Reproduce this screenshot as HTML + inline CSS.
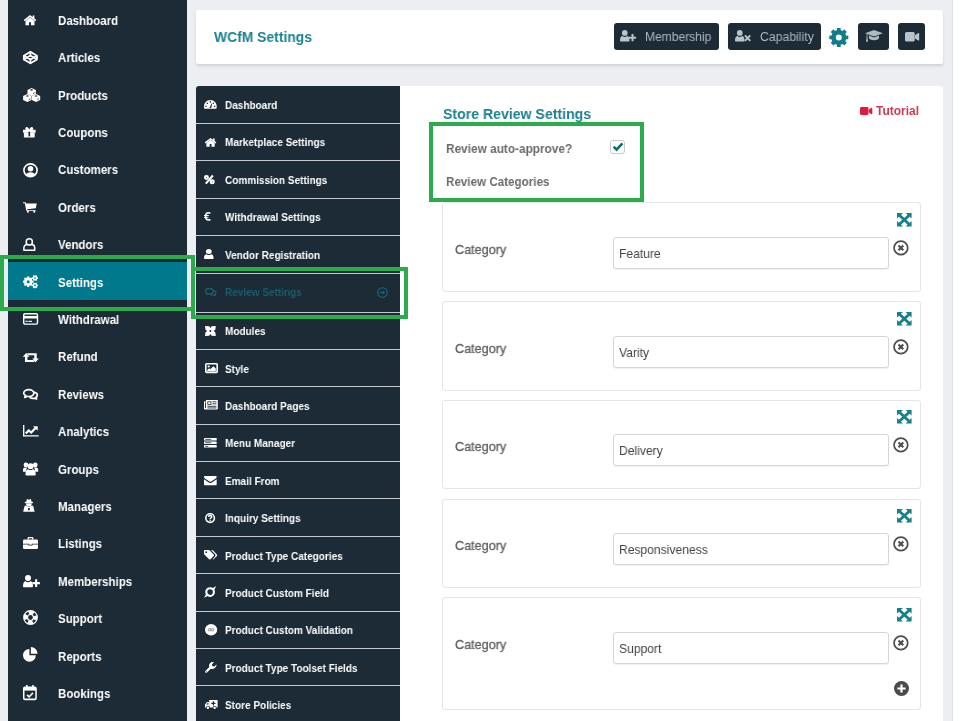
<!DOCTYPE html>
<html><head><meta charset="utf-8"><title>WCfM Settings</title>
<style>
html,body{margin:0;padding:0;}
body{width:960px;height:721px;overflow:hidden;background:#eceef2;font-family:"Liberation Sans",sans-serif;position:relative;}
.t{position:absolute;white-space:nowrap;transform-origin:0 50%;will-change:transform;}
.abs{position:absolute;}
.gbox{position:absolute;border:4.4px solid #2bab4b;box-sizing:border-box;}
.card{position:absolute;left:441.5px;width:479px;background:#fff;border:1px solid #e3e5e8;border-radius:3px;box-sizing:border-box;}
.inp{position:absolute;left:613px;width:275.5px;height:32px;border:1px solid #d6d6d6;border-radius:3px;box-sizing:border-box;background:#fff;box-shadow:0 1px 1px rgba(0,0,0,.06);}
.sep{position:absolute;left:196px;width:204.3px;height:1px;background:#c3c9ce;}
.btn{position:absolute;top:23px;height:26.5px;background:#1c2b36;border-radius:3px;}
</style></head><body>

<div class="abs" style="left:952px;top:0;width:8px;height:721px;background:#fff;border-left:1px solid #dfe2e6;box-sizing:border-box"></div>
<div class="abs" style="left:8px;top:0;width:179px;height:721px;background:#1c2b36"></div>
<div class="abs" style="left:8px;top:262px;width:179px;height:38px;background:#00798c"></div>
<svg style="position:absolute;left:23.75px;top:14.8px;color:#fff;overflow:visible;" width="12" height="10.2" viewBox="0 0 12 10" preserveAspectRatio="none" fill="currentColor"><path d="M6 0 L12.3 5 L11.3 6.2 L6 2 L0.7 6.2 L-0.3 5 Z"/><path d="M6 2.2 L10.5 5.8 V10 H7 V7 H5 V10 H1.5 V5.8 Z"/><rect x="8.6" y="0.5" width="1.8" height="3.2"/></svg>
<div class="t" style="left:58px;top:10.8px;line-height:20px;font-size:13px;font-weight:bold;color:#fff;transform:scaleX(0.885);">Dashboard</div>
<svg style="position:absolute;left:22.9px;top:51px;color:#fff;overflow:visible;" width="14.8" height="13.1" viewBox="0 0 15 14" preserveAspectRatio="none" fill="currentColor"><g fill="none" stroke="currentColor" stroke-width="1.9" stroke-linejoin="round"><path d="M7.5 0.9 L14.1 5 V9 L7.5 13.1 L0.9 9 V5 Z"/><path d="M0.9 5 L7.5 9.2 L14.1 5 M0.9 9 L7.5 4.8 L14.1 9 M7.5 0.9 V4.8 M7.5 9.2 V13.1"/></g></svg>
<div class="t" style="left:58px;top:48.2px;line-height:20px;font-size:13px;font-weight:bold;color:#fff;transform:scaleX(0.885);">Articles</div>
<svg style="position:absolute;left:22.9px;top:88px;color:#fff;overflow:visible;" width="17.3" height="14" viewBox="0 0 17.3 14" preserveAspectRatio="none" fill="currentColor"><path d="M8.65 0.0 L12.850000000000001 1.9 V6.0 L8.65 7.9 L4.45 6.0 V1.9 Z"/><path fill="#1c2b36" d="M8.65 1.1 L10.450000000000001 1.9 L8.65 2.7 L6.8500000000000005 1.9 Z"/><path fill="none" stroke="#1c2b36" stroke-width="0.9" stroke-linecap="round" d="M10.35 5.5 L11.25 4.8"/><path d="M4.3 6.1 L8.5 8 V12.1 L4.3 14 L0.09999999999999964 12.1 V8 Z"/><path fill="#1c2b36" d="M4.3 7.2 L6.1 8 L4.3 8.8 L2.5 8 Z"/><path fill="none" stroke="#1c2b36" stroke-width="0.9" stroke-linecap="round" d="M6.0 11.6 L6.9 10.9"/><path d="M13 6.1 L17.2 8 V12.1 L13 14 L8.8 12.1 V8 Z"/><path fill="#1c2b36" d="M13 7.2 L14.8 8 L13 8.8 L11.2 8 Z"/><path fill="none" stroke="#1c2b36" stroke-width="0.9" stroke-linecap="round" d="M14.7 11.6 L15.6 10.9"/></svg>
<div class="t" style="left:58px;top:85.6px;line-height:20px;font-size:13px;font-weight:bold;color:#fff;transform:scaleX(0.885);">Products</div>
<svg style="position:absolute;left:23px;top:126.8px;color:#fff;overflow:visible;" width="12.6" height="10.4" viewBox="0 0 12.6 10.5" preserveAspectRatio="none" fill="currentColor"><path d="M3.2 0.2 C4.6 -0.2 5.6 1 6.3 2.4 C7 1 8 -0.2 9.4 0.2 C10.8 0.8 10.4 2.4 9.6 3 H3 C2.2 2.4 1.8 0.8 3.2 0.2 Z"/><rect x="0" y="2.8" width="12.6" height="3"/><rect x="0.9" y="5.5" width="10.8" height="5" rx="0.6"/><rect x="5.45" y="4.8" width="1.7" height="4.7" fill="#1c2b36"/></svg>
<div class="t" style="left:58px;top:123.0px;line-height:20px;font-size:13px;font-weight:bold;color:#fff;transform:scaleX(0.885);">Coupons</div>
<svg style="position:absolute;left:23px;top:162.6px;color:#fff;overflow:visible;" width="15" height="14.6" viewBox="0 0 15 15" preserveAspectRatio="none" fill="currentColor"><defs><clipPath id="ucc"><circle cx="7.5" cy="7.5" r="6.4"/></clipPath></defs><circle cx="7.5" cy="7.5" r="6.6" fill="none" stroke="currentColor" stroke-width="1.6"/><circle cx="7.5" cy="6" r="2.8"/><ellipse cx="7.5" cy="13.6" rx="5.2" ry="4" clip-path="url(#ucc)"/></svg>
<div class="t" style="left:58px;top:160.4px;line-height:20px;font-size:13px;font-weight:bold;color:#fff;transform:scaleX(0.885);">Customers</div>
<svg style="position:absolute;left:23px;top:202px;color:#fff;overflow:visible;" width="14" height="10.8" viewBox="0 0 14 11" preserveAspectRatio="none" fill="currentColor"><path d="M0 0.3 H2.6 L3 1.6 H13.8 L12.8 6.4 L4.2 7.3 L4.4 8.1 H12.6 V9 H3.3 L1.8 1.3 H0 Z"/><circle cx="4.9" cy="10" r="1.05"/><circle cx="11.3" cy="10" r="1.05"/></svg>
<div class="t" style="left:58px;top:197.8px;line-height:20px;font-size:13px;font-weight:bold;color:#fff;transform:scaleX(0.885);">Orders</div>
<svg style="position:absolute;left:23px;top:238px;color:#fff;overflow:visible;" width="12.6" height="13" viewBox="0 0 12.6 13" preserveAspectRatio="none" fill="currentColor"><g fill="none" stroke="currentColor" stroke-width="1.5"><path d="M0.9 12.2 V10 C0.9 7.8 2.3 6.6 4.2 6.6 H8.4 C10.3 6.6 11.7 7.8 11.7 10 V12.2 Z" stroke-linejoin="round"/><circle cx="6.3" cy="3.9" r="3.1" fill="#1c2b36"/></g></svg>
<div class="t" style="left:58px;top:235.2px;line-height:20px;font-size:13px;font-weight:bold;color:#fff;transform:scaleX(0.885);">Vendors</div>
<svg style="position:absolute;left:23.1px;top:275px;color:#fff;overflow:visible;" width="15" height="13" viewBox="0 0 15 13" preserveAspectRatio="none" fill="currentColor"><path fill-rule="evenodd" d="M9.28 5.69 L10.39 5.61 L10.39 7.79 L9.28 7.71 L8.80 8.87 L9.64 9.60 L8.10 11.14 L7.37 10.30 L6.21 10.78 L6.29 11.89 L4.11 11.89 L4.19 10.78 L3.03 10.30 L2.30 11.14 L0.76 9.60 L1.60 8.87 L1.12 7.71 L0.01 7.79 L0.01 5.61 L1.12 5.69 L1.60 4.53 L0.76 3.80 L2.30 2.26 L3.03 3.10 L4.19 2.62 L4.11 1.51 L6.29 1.51 L6.21 2.62 L7.37 3.10 L8.10 2.26 L9.64 3.80 L8.80 4.53 Z M3.70 6.70 a1.5 1.5 0 1 0 3.0 0 a1.5 1.5 0 1 0 -3.0 0 Z"/><path fill-rule="evenodd" d="M14.23 2.25 L14.98 2.16 L14.98 3.84 L14.23 3.75 L13.76 4.55 L14.22 5.16 L12.76 6.01 L12.46 5.30 L11.54 5.30 L11.24 6.01 L9.78 5.16 L10.24 4.55 L9.77 3.75 L9.02 3.84 L9.02 2.16 L9.77 2.25 L10.24 1.45 L9.78 0.84 L11.24 -0.01 L11.54 0.70 L12.46 0.70 L12.76 -0.01 L14.22 0.84 L13.76 1.45 Z M11.15 3.00 a0.85 0.85 0 1 0 1.7 0 a0.85 0.85 0 1 0 -1.7 0 Z"/><path fill-rule="evenodd" d="M14.23 9.65 L14.98 9.56 L14.98 11.24 L14.23 11.15 L13.76 11.95 L14.22 12.56 L12.76 13.41 L12.46 12.70 L11.54 12.70 L11.24 13.41 L9.78 12.56 L10.24 11.95 L9.77 11.15 L9.02 11.24 L9.02 9.56 L9.77 9.65 L10.24 8.85 L9.78 8.24 L11.24 7.39 L11.54 8.10 L12.46 8.10 L12.76 7.39 L14.22 8.24 L13.76 8.85 Z M11.15 10.40 a0.85 0.85 0 1 0 1.7 0 a0.85 0.85 0 1 0 -1.7 0 Z"/></svg>
<div class="t" style="left:58px;top:272.6px;line-height:20px;font-size:13px;font-weight:bold;color:#fff;transform:scaleX(0.885);">Settings</div>
<svg style="position:absolute;left:23px;top:313.2px;color:#fff;overflow:visible;" width="15.2" height="11.8" viewBox="0 0 15 12" preserveAspectRatio="none" fill="currentColor"><rect x="0.7" y="0.7" width="13.6" height="10.6" rx="1.3" fill="none" stroke="currentColor" stroke-width="1.4"/><rect x="0.7" y="3" width="13.6" height="2.6"/><rect x="2.4" y="7.9" width="2.2" height="1.2"/><rect x="5.4" y="7.9" width="3.4" height="1.2"/></svg>
<div class="t" style="left:58px;top:310.0px;line-height:20px;font-size:13px;font-weight:bold;color:#fff;transform:scaleX(0.885);">Withdrawal</div>
<svg style="position:absolute;left:23px;top:352.5px;color:#fff;overflow:visible;" width="15.7" height="9.3" viewBox="0 0 16 9.5" preserveAspectRatio="none" fill="currentColor"><path d="M3.2 0 L6.6 3.8 H4.5 V7.1 H10.4 L12.2 9.3 H2 V3.8 H-0.2 Z"/><path d="M12.8 9.5 L9.4 5.7 H11.5 V2.4 H5.6 L3.8 0.2 H14 V5.7 H16.2 Z"/></svg>
<div class="t" style="left:58px;top:347.4px;line-height:20px;font-size:13px;font-weight:bold;color:#fff;transform:scaleX(0.885);">Refund</div>
<svg style="position:absolute;left:23px;top:389.2px;color:#fff;overflow:visible;" width="15" height="10.7" viewBox="0 0 15 11" preserveAspectRatio="none" fill="currentColor"><g fill="none" stroke="currentColor" stroke-width="1.75" stroke-linejoin="round"><path d="M10.2 3.2 C12.6 3.4 14.3 4.8 14.3 6.4 C14.3 7.4 13.7 8.2 12.8 8.8 L13.6 10.3 L11.2 9.5 C9.4 9.8 7.6 9.3 6.6 8.3"/><path fill="#1c2b36" d="M5.8 0.7 C8.6 0.7 10.9 2.2 10.9 4.2 C10.9 6.2 8.6 7.7 5.8 7.7 C5.2 7.7 4.7 7.6 4.2 7.5 L1.8 8.6 L2.5 6.8 C1.4 6.2 0.7 5.3 0.7 4.2 C0.7 2.2 3 0.7 5.8 0.7 Z"/></g></svg>
<div class="t" style="left:58px;top:384.8px;line-height:20px;font-size:13px;font-weight:bold;color:#fff;transform:scaleX(0.885);">Reviews</div>
<svg style="position:absolute;left:23px;top:425.4px;color:#fff;overflow:visible;" width="15.7" height="11.6" viewBox="0 0 16 12" preserveAspectRatio="none" fill="currentColor"><path d="M0 0 H1.4 V10.6 H16 V12 H0 Z"/><path fill="none" stroke="currentColor" stroke-width="2.2" d="M2.8 8.9 L5.9 5.6 L8.4 7.8 L12.8 3.2"/><path d="M10.2 1.2 H15 V6 Z"/></svg>
<div class="t" style="left:58px;top:422.2px;line-height:20px;font-size:13px;font-weight:bold;color:#fff;transform:scaleX(0.885);">Analytics</div>
<svg style="position:absolute;left:23px;top:461.8px;color:#fff;overflow:visible;" width="15.2" height="13.4" viewBox="0 0 15 13.4" preserveAspectRatio="none" fill="currentColor"><circle cx="2.9" cy="2.9" r="2.3"/><circle cx="12.1" cy="2.9" r="2.3"/><path d="M0 9.8 V7.6 C0 6.2 1 5.5 2 5.5 H4.4 C3.4 6.6 3 7.8 3 9.8 Z"/><path d="M15 9.8 V7.6 C15 6.2 14 5.5 13 5.5 H10.6 C11.6 6.6 12 7.8 12 9.8 Z"/><circle cx="7.5" cy="4.2" r="2.9"/><path d="M3.3 13.4 C2.6 13.4 2.3 12.8 2.4 12 C2.6 9 3.6 7.3 5.3 7.2 C6 7.8 6.7 8.1 7.5 8.1 C8.3 8.1 9 7.8 9.7 7.2 C11.4 7.3 12.4 9 12.6 12 C12.7 12.8 12.4 13.4 11.7 13.4 Z"/></svg>
<div class="t" style="left:58px;top:459.59999999999997px;line-height:20px;font-size:13px;font-weight:bold;color:#fff;transform:scaleX(0.885);">Groups</div>
<svg style="position:absolute;left:23.4px;top:499.2px;color:#fff;overflow:visible;" width="11.8" height="12.7" viewBox="0 0 11.8 12.7" preserveAspectRatio="none" fill="currentColor"><path d="M3.2 3 L3.8 0.5 C3.9 0.1 4.3 0 4.6 0.2 L5.9 0.8 L7.2 0.2 C7.5 0 7.9 0.1 8 0.5 L8.6 3 Z"/><ellipse cx="5.9" cy="3.5" rx="4.3" ry="1.1"/><path d="M3 4.4 H8.8 C8.8 6.4 7.6 7.4 5.9 7.4 C4.2 7.4 3 6.4 3 4.4 Z"/><path d="M0.2 12.7 L1.4 7.6 C1.7 6.8 2.4 6.4 3.2 6.4 L5.9 8 L8.6 6.4 C9.4 6.4 10.1 6.8 10.4 7.6 L11.6 12.7 Z"/><path fill="#1c2b36" d="M5.2 9 H6.6 L6.9 11.2 H4.9 Z"/></svg>
<div class="t" style="left:58px;top:497.0px;line-height:20px;font-size:13px;font-weight:bold;color:#fff;transform:scaleX(0.885);">Managers</div>
<svg style="position:absolute;left:23px;top:536.6px;color:#fff;overflow:visible;" width="15" height="12" viewBox="0 0 15 12" preserveAspectRatio="none" fill="currentColor"><path fill="none" stroke="currentColor" stroke-width="1.3" d="M5.2 2.6 V1.2 C5.2 0.9 5.4 0.7 5.7 0.7 H9.3 C9.6 0.7 9.8 0.9 9.8 1.2 V2.6"/><rect x="0" y="2.4" width="15" height="9.6" rx="1.3"/><path fill="#1c2b36" d="M0 6.8 H6.3 V7.7 H8.7 V6.8 H15 V7.4 H9.5 V8.4 H5.5 V7.4 H0 Z"/></svg>
<div class="t" style="left:58px;top:534.4px;line-height:20px;font-size:13px;font-weight:bold;color:#fff;transform:scaleX(0.885);">Listings</div>
<svg style="position:absolute;left:23px;top:574.5px;color:#fff;overflow:visible;" width="16.8" height="12.2" viewBox="0 0 16.8 12" preserveAspectRatio="none" fill="currentColor"><circle cx="5" cy="3" r="3"/><path d="M1 12 C0.3 12 0 11.5 0 10.8 C0.1 8 1 6.3 2.6 6.2 C3.3 6.9 4.1 7.2 5 7.2 C5.9 7.2 6.7 6.9 7.4 6.2 C9 6.3 9.9 8 10 10.8 C10 11.5 9.7 12 9 12 Z"/><path d="M12.1 4.2 H14.2 V6.9 H16.9 V9 H14.2 V11.7 H12.1 V9 H9.4 V6.9 H12.1 Z"/></svg>
<div class="t" style="left:58px;top:571.8px;line-height:20px;font-size:13px;font-weight:bold;color:#fff;transform:scaleX(0.885);">Memberships</div>
<svg style="position:absolute;left:23px;top:610px;color:#fff;overflow:visible;" width="15" height="15" viewBox="0 0 15 15" preserveAspectRatio="none" fill="currentColor"><circle cx="7.5" cy="7.5" r="6.8" fill="none" stroke="currentColor" stroke-width="1.2"/><circle cx="7.5" cy="7.5" r="3" fill="none" stroke="currentColor" stroke-width="1.2"/><circle cx="7.5" cy="7.5" r="4.9" fill="none" stroke="currentColor" stroke-width="3.4" stroke-dasharray="4.9 2.797" stroke-dashoffset="2.45"/></svg>
<div class="t" style="left:58px;top:609.1999999999999px;line-height:20px;font-size:13px;font-weight:bold;color:#fff;transform:scaleX(0.885);">Support</div>
<svg style="position:absolute;left:23px;top:647.4px;color:#fff;overflow:visible;" width="15" height="14.6" viewBox="0 0 15 14.6" preserveAspectRatio="none" fill="currentColor"><path d="M6.4 8.2 V1.9 A6.4 6.4 0 1 0 12.8 8.2 Z"/><path d="M7.9 6.7 V0 A6.7 6.7 0 0 1 14.6 6.7 Z"/></svg>
<div class="t" style="left:58px;top:646.5999999999999px;line-height:20px;font-size:13px;font-weight:bold;color:#fff;transform:scaleX(0.885);">Reports</div>
<svg style="position:absolute;left:23px;top:685px;color:#fff;overflow:visible;" width="13.8" height="15.2" viewBox="0 0 13.8 15" preserveAspectRatio="none" fill="currentColor"><rect x="0.75" y="2.3" width="12.3" height="11.9" rx="1.2" fill="none" stroke="currentColor" stroke-width="1.5"/><rect x="0.75" y="2.3" width="12.3" height="3.2"/><rect x="3" y="0" width="1.7" height="3.6" rx="0.6"/><rect x="9.1" y="0" width="1.7" height="3.6" rx="0.6"/><path fill="none" stroke="currentColor" stroke-width="1.6" d="M4 9.7 L6.1 11.8 L9.9 7.8"/></svg>
<div class="t" style="left:58px;top:683.9999999999999px;line-height:20px;font-size:13px;font-weight:bold;color:#fff;transform:scaleX(0.885);">Bookings</div>
<div class="abs" style="left:195.8px;top:9.6px;width:747.2px;height:54px;background:#fff;border-radius:2.5px;box-shadow:0 2px 3px rgba(0,0,0,.12)"></div>
<div class="t" style="left:213.8px;top:27.0px;line-height:20px;font-size:14.5px;font-weight:bold;color:#1d8291;transform:scaleX(0.958);">WCfM Settings</div>
<div class="btn" style="left:614px;width:105px"></div>
<svg style="position:absolute;left:620px;top:30.2px;color:#b9c4cb;overflow:visible;" width="16" height="11.6" viewBox="0 0 16.8 12" preserveAspectRatio="none" fill="currentColor"><circle cx="5" cy="3" r="3"/><path d="M1 12 C0.3 12 0 11.5 0 10.8 C0.1 8 1 6.3 2.6 6.2 C3.3 6.9 4.1 7.2 5 7.2 C5.9 7.2 6.7 6.9 7.4 6.2 C9 6.3 9.9 8 10 10.8 C10 11.5 9.7 12 9 12 Z"/><path d="M12.1 4.2 H14.2 V6.9 H16.9 V9 H14.2 V11.7 H12.1 V9 H9.4 V6.9 H12.1 Z"/></svg>
<div class="t" style="left:645.4px;top:26.6px;line-height:20px;font-size:12.5px;font-weight:normal;color:#adb8c0;transform:scaleX(0.964);">Membership</div>
<div class="btn" style="left:728px;width:93px"></div>
<svg style="position:absolute;left:735px;top:30.2px;color:#b9c4cb;overflow:visible;" width="16" height="11.6" viewBox="0 0 16.8 12" preserveAspectRatio="none" fill="currentColor"><circle cx="5" cy="3" r="3"/><path d="M1 12 C0.3 12 0 11.5 0 10.8 C0.1 8 1 6.3 2.6 6.2 C3.3 6.9 4.1 7.2 5 7.2 C5.9 7.2 6.7 6.9 7.4 6.2 C9 6.3 9.9 8 10 10.8 C10 11.5 9.7 12 9 12 Z"/><path fill="none" stroke="currentColor" stroke-width="2" d="M10.4 5.6 L16 11.2 M16 5.6 L10.4 11.2"/></svg>
<div class="t" style="left:760px;top:26.6px;line-height:20px;font-size:12.5px;font-weight:normal;color:#adb8c0;transform:scaleX(0.98);">Capability</div>
<svg style="position:absolute;left:829.2px;top:28px;color:#0e7b8e;overflow:visible;" width="19.6" height="18.8" viewBox="0 0 19.6 18.8" preserveAspectRatio="none" fill="currentColor"><path fill-rule="evenodd" d="M17.19 7.63 L19.31 7.47 L19.31 11.33 L17.19 11.17 L16.28 13.37 L17.89 14.76 L15.16 17.49 L13.77 15.88 L11.57 16.79 L11.73 18.91 L7.87 18.91 L8.03 16.79 L5.83 15.88 L4.44 17.49 L1.71 14.76 L3.32 13.37 L2.41 11.17 L0.29 11.33 L0.29 7.47 L2.41 7.63 L3.32 5.43 L1.71 4.04 L4.44 1.31 L5.83 2.92 L8.03 2.01 L7.87 -0.11 L11.73 -0.11 L11.57 2.01 L13.77 2.92 L15.16 1.31 L17.89 4.04 L16.28 5.43 Z M6.80 9.40 a3.0 3.0 0 1 0 6.0 0 a3.0 3.0 0 1 0 -6.0 0 Z"/></svg>
<div class="btn" style="left:857.5px;width:31px"></div>
<svg style="position:absolute;left:864.5px;top:29.9px;color:#aeb9c0;overflow:visible;" width="18" height="12" viewBox="0 0 18 12" preserveAspectRatio="none" fill="currentColor"><path d="M9 0 L18 3.2 L9 6.4 L0 3.2 Z"/><path d="M4 5.6 L9 7.4 L14 5.6 V8 C14 9.3 11.8 10.2 9 10.2 C6.2 10.2 4 9.3 4 8 Z"/><path d="M1.6 4.2 L2.5 4.5 V7.6 L3.1 11.8 H1 L1.6 7.6 Z"/></svg>
<div class="btn" style="left:897.5px;width:27px"></div>
<svg style="position:absolute;left:904.7px;top:31.5px;color:#b9c3ca;overflow:visible;" width="14.2" height="9.6" viewBox="0 0 14 9.6" preserveAspectRatio="none" fill="currentColor"><rect x="0" y="0" width="9.6" height="9.6" rx="1.6"/><path d="M9.9 3.2 L13 1 C13.4 0.7 14 1 14 1.5 V8.1 C14 8.6 13.4 8.9 13 8.6 L9.9 6.4 Z"/></svg>
<div class="abs" style="left:196px;top:86px;width:747px;height:640px;background:#fff;border-radius:3px 3px 0 0"></div>
<div class="abs" style="left:196px;top:86px;width:204.3px;height:640px;background:#1c2b36;border-radius:3px 0 0 0"></div>
<svg style="position:absolute;left:204.4px;top:100.4px;color:#fff;overflow:visible;" width="12.7" height="8.8" viewBox="0 0 12.7 8.8" preserveAspectRatio="none" fill="currentColor"><path d="M0.4 8.8 C0.1 8.2 0 7.3 0 6.4 C0 2.9 2.8 0 6.35 0 C9.9 0 12.7 2.9 12.7 6.4 C12.7 7.3 12.6 8.2 12.3 8.8 Z"/><g fill="#1c2b36"><circle cx="2" cy="6.3" r="0.8"/><circle cx="3.3" cy="3.2" r="0.8"/><circle cx="6.35" cy="1.9" r="0.8"/><circle cx="9.4" cy="3.2" r="0.8"/><circle cx="10.7" cy="6.3" r="0.8"/><path d="M5.4 7.9 L7.6 3.4 L8.2 3.7 L7.2 8.1 Z"/></g></svg>
<div class="t" style="left:225px;top:95.0px;line-height:20px;font-size:11px;font-weight:bold;color:#fff;transform:scaleX(0.91);">Dashboard</div>
<svg style="position:absolute;left:204.9px;top:137.6px;color:#fff;overflow:visible;" width="11.1" height="8.7" viewBox="0 0 12 10" preserveAspectRatio="none" fill="currentColor"><path d="M6 0 L12.3 5 L11.3 6.2 L6 2 L0.7 6.2 L-0.3 5 Z"/><path d="M6 2.2 L10.5 5.8 V10 H7 V7 H5 V10 H1.5 V5.8 Z"/><rect x="8.6" y="0.5" width="1.8" height="3.2"/></svg>
<div class="t" style="left:225px;top:132.25px;line-height:20px;font-size:11px;font-weight:bold;color:#fff;transform:scaleX(0.91);">Marketplace Settings</div>
<div class="sep" style="top:122.5px"></div>
<svg style="position:absolute;left:204.4px;top:174.7px;color:#fff;overflow:visible;" width="10.7" height="9.2" viewBox="0 0 10.7 9.2" preserveAspectRatio="none" fill="currentColor"><g fill="none" stroke="currentColor"><circle cx="2.5" cy="2.5" r="1.5" stroke-width="2"/><circle cx="8.2" cy="6.7" r="1.5" stroke-width="2"/><path stroke-width="2.1" d="M8.9 0.5 L1.8 8.7"/></g></svg>
<div class="t" style="left:225px;top:169.75px;line-height:20px;font-size:11px;font-weight:bold;color:#fff;transform:scaleX(0.91);">Commission Settings</div>
<div class="sep" style="top:160.0px"></div>
<svg style="position:absolute;left:204.4px;top:212.4px;color:#fff;overflow:visible;" width="6.7" height="8.8" viewBox="0 0 6.8 8.8" preserveAspectRatio="none" fill="currentColor"><path fill="none" stroke="currentColor" stroke-width="1.6" d="M6.5 1.3 C5.9 0.9 5.2 0.8 4.6 0.8 C2.9 0.8 1.7 2.2 1.7 4.4 C1.7 6.6 2.9 8 4.6 8 C5.2 8 5.9 7.9 6.5 7.5"/><rect x="0" y="3" width="4.9" height="1"/><rect x="0" y="4.9" width="4.5" height="1"/></svg>
<div class="t" style="left:225px;top:207.0px;line-height:20px;font-size:11px;font-weight:bold;color:#fff;transform:scaleX(0.91);">Withdrawal Settings</div>
<div class="sep" style="top:197.5px"></div>
<svg style="position:absolute;left:204.4px;top:249.2px;color:#fff;overflow:visible;" width="9.6" height="10" viewBox="0 0 10 12" preserveAspectRatio="none" fill="currentColor"><circle cx="5" cy="3" r="3"/><path d="M1 12 C0.3 12 0 11.5 0 10.8 C0.1 8 1 6.3 2.6 6.2 C3.3 6.9 4.1 7.2 5 7.2 C5.9 7.2 6.7 6.9 7.4 6.2 C9 6.3 9.9 8 10 10.8 C10 11.5 9.7 12 9 12 Z"/></svg>
<div class="t" style="left:225px;top:244.5px;line-height:20px;font-size:11px;font-weight:bold;color:#fff;transform:scaleX(0.91);">Vendor Registration</div>
<div class="sep" style="top:234.5px"></div>
<svg style="position:absolute;left:204.9px;top:287.8px;color:#1b5c6e;overflow:visible;" width="11.4" height="8.2" viewBox="0 0 15 11" preserveAspectRatio="none" fill="currentColor"><g fill="none" stroke="currentColor" stroke-width="1.75" stroke-linejoin="round"><path d="M10.2 3.2 C12.6 3.4 14.3 4.8 14.3 6.4 C14.3 7.4 13.7 8.2 12.8 8.8 L13.6 10.3 L11.2 9.5 C9.4 9.8 7.6 9.3 6.6 8.3"/><path fill="#1c2b36" d="M5.8 0.7 C8.6 0.7 10.9 2.2 10.9 4.2 C10.9 6.2 8.6 7.7 5.8 7.7 C5.2 7.7 4.7 7.6 4.2 7.5 L1.8 8.6 L2.5 6.8 C1.4 6.2 0.7 5.3 0.7 4.2 C0.7 2.2 3 0.7 5.8 0.7 Z"/></g></svg>
<div class="t" style="left:225px;top:282.1px;line-height:20px;font-size:11px;font-weight:bold;color:#1b5c6e;transform:scaleX(0.91);">Review Settings</div>
<div class="sep" style="top:272.5px"></div>
<svg style="position:absolute;left:205.3px;top:325.6px;color:#fff;overflow:visible;" width="10.8" height="10" viewBox="0 0 10.8 10" preserveAspectRatio="none" fill="currentColor"><path d="M0 0 L4.2 0.2 L5.4 2 L6.6 0.2 L10.8 0 L10.3 3.8 L8.6 5 L10.3 6.2 L10.8 10 L6.6 9.8 L5.4 8 L4.2 9.8 L0 10 L0.5 6.2 L2.2 5 L0.5 3.8 Z"/><circle cx="5.4" cy="5" r="1" fill="#1c2b36"/></svg>
<div class="t" style="left:225px;top:321.15px;line-height:20px;font-size:11px;font-weight:bold;color:#fff;transform:scaleX(0.91);">Modules</div>
<div class="sep" style="top:311.5px"></div>
<svg style="position:absolute;left:204.9px;top:362.7px;color:#fff;overflow:visible;" width="13" height="10.2" viewBox="0 0 13 10.2" preserveAspectRatio="none" fill="currentColor"><rect x="0.8" y="0.8" width="11.4" height="8.6" rx="0.8" fill="none" stroke="currentColor" stroke-width="1.6"/><circle cx="3.7" cy="3.5" r="1.1"/><path d="M2.2 8.2 V7 L4.2 5.2 L5.3 6.2 L8.4 3.2 L10.8 5.6 V8.2 Z"/></svg>
<div class="t" style="left:225px;top:358.5px;line-height:20px;font-size:11px;font-weight:bold;color:#fff;transform:scaleX(0.91);">Style</div>
<div class="sep" style="top:348.8px"></div>
<svg style="position:absolute;left:204.4px;top:400px;color:#fff;overflow:visible;" width="13.8" height="9.6" viewBox="0 0 13.8 9.6" preserveAspectRatio="none" fill="currentColor"><path d="M2 0 H13.8 V8.4 C13.8 9.1 13.3 9.6 12.6 9.6 H1.2 C0.5 9.6 0 9.1 0 8.4 V1.4 H2 Z"/><g fill="#1c2b36"><rect x="1" y="2.4" width="0.9" height="5.6"/><rect x="3.4" y="1.4" width="4" height="3.4"/><rect x="8.4" y="1.4" width="4" height="0.9"/><rect x="8.4" y="3.4" width="4" height="0.9"/><rect x="3.4" y="5.8" width="9" height="0.9"/><rect x="3.4" y="7.5" width="9" height="0.9"/></g><rect x="4.2" y="2.2" width="2.4" height="1.8"/></svg>
<div class="t" style="left:225px;top:395.9px;line-height:20px;font-size:11px;font-weight:bold;color:#fff;transform:scaleX(0.91);">Dashboard Pages</div>
<div class="sep" style="top:386.2px"></div>
<svg style="position:absolute;left:204.4px;top:437.6px;color:#fff;overflow:visible;" width="12.7" height="9.6" viewBox="0 0 12.7 9.6" preserveAspectRatio="none" fill="currentColor"><rect x="0" y="0" width="12.7" height="2.6" rx="0.4"/><rect x="0" y="3.5" width="12.7" height="2.6" rx="0.4"/><rect x="0" y="7" width="12.7" height="2.6" rx="0.4"/><g fill="#1c2b36"><rect x="1.2" y="0.9" width="6" height="0.8"/><rect x="1.2" y="4.4" width="6" height="0.8"/><rect x="1.2" y="7.9" width="3" height="0.8"/></g></svg>
<div class="t" style="left:225px;top:433.3px;line-height:20px;font-size:11px;font-weight:bold;color:#fff;transform:scaleX(0.91);">Menu Manager</div>
<div class="sep" style="top:423.6px"></div>
<svg style="position:absolute;left:204.4px;top:475.7px;color:#fff;overflow:visible;" width="12.7" height="9.2" viewBox="0 0 12.7 9.2" preserveAspectRatio="none" fill="currentColor"><path d="M0 1 C0 0.4 0.4 0 1 0 H11.7 C12.3 0 12.7 0.4 12.7 1 C12.7 1.6 12.3 2 11.8 2.4 L7.2 5.4 C6.7 5.8 6 5.8 5.5 5.4 L0.9 2.4 C0.4 2 0 1.6 0 1 Z"/><path d="M0 3.2 L5.2 6.7 C5.9 7.2 6.8 7.2 7.5 6.7 L12.7 3.2 V8.2 C12.7 8.8 12.3 9.2 11.7 9.2 H1 C0.4 9.2 0 8.8 0 8.2 Z"/></svg>
<div class="t" style="left:225px;top:470.7px;line-height:20px;font-size:11px;font-weight:bold;color:#fff;transform:scaleX(0.91);">Email From</div>
<div class="sep" style="top:461.0px"></div>
<svg style="position:absolute;left:204.9px;top:513.4px;color:#fff;overflow:visible;" width="10.2" height="10.2" viewBox="0 0 10.2 10.2" preserveAspectRatio="none" fill="currentColor"><circle cx="5.1" cy="5.1" r="4.3" fill="none" stroke="currentColor" stroke-width="1.6"/><path fill="none" stroke="currentColor" stroke-width="1.5" d="M3.5 4 C3.5 3 4.2 2.5 5.1 2.5 C6 2.5 6.7 3 6.7 3.9 C6.7 4.9 5.1 5 5.1 6.2"/><rect x="4.45" y="6.8" width="1.3" height="1.2"/></svg>
<div class="t" style="left:225px;top:508.0999999999999px;line-height:20px;font-size:11px;font-weight:bold;color:#fff;transform:scaleX(0.91);">Inquiry Settings</div>
<div class="sep" style="top:498.4px"></div>
<svg style="position:absolute;left:204.4px;top:550.2px;color:#fff;overflow:visible;" width="13.2" height="9.6" viewBox="0 0 13.2 9.6" preserveAspectRatio="none" fill="currentColor"><path d="M0 0.8 C0 0.3 0.3 0 0.8 0 H4.3 C4.8 0 5.3 0.2 5.7 0.6 L9.7 4.6 C10.1 5 10.1 5.6 9.7 6 L6.5 9.2 C6.1 9.6 5.5 9.6 5.1 9.2 L0.6 4.7 C0.2 4.3 0 3.8 0 3.3 Z"/><circle cx="2.2" cy="2.2" r="0.9" fill="#1c2b36"/><path d="M7 0 H7.8 C8.3 0 8.8 0.2 9.2 0.6 L12.9 4.6 C13.3 5 13.3 5.6 12.9 6 L9.7 9.2 C9.4 9.5 9 9.6 8.6 9.5 L11.1 6.4 C11.6 5.8 11.6 4.9 11.1 4.3 Z"/></svg>
<div class="t" style="left:225px;top:545.5px;line-height:20px;font-size:11px;font-weight:bold;color:#fff;transform:scaleX(0.91);">Product Type Categories</div>
<div class="sep" style="top:535.8px"></div>
<svg style="position:absolute;left:204.4px;top:586.2px;color:#fff;overflow:visible;" width="12.2" height="11.8" viewBox="0 0 12.2 11.8" preserveAspectRatio="none" fill="currentColor"><ellipse cx="6.1" cy="6.1" rx="3.8" ry="3.9" fill="none" stroke="currentColor" stroke-width="2.1"/><path d="M8.6 2.3 L12.2 0 L10.2 3.9 Z"/><path d="M3.6 9.9 L0 11.8 L2 8.3 Z"/></svg>
<div class="t" style="left:225px;top:582.9000000000001px;line-height:20px;font-size:11px;font-weight:bold;color:#fff;transform:scaleX(0.91);">Product Custom Field</div>
<div class="sep" style="top:573.2px"></div>
<svg style="position:absolute;left:204.9px;top:623.9px;color:#fff;overflow:visible;" width="12.2" height="11.5" viewBox="0 0 12.2 11.6" preserveAspectRatio="none" fill="currentColor"><ellipse cx="6.1" cy="5.8" rx="6.1" ry="5.8"/><g fill="none" stroke="#6b7780" stroke-width="0.8"><ellipse cx="4.7" cy="5.8" rx="1.4" ry="1.2"/><ellipse cx="7.5" cy="5.8" rx="1.4" ry="1.2"/></g></svg>
<div class="t" style="left:225px;top:620.3px;line-height:20px;font-size:11px;font-weight:bold;color:#fff;transform:scaleX(0.91);">Product Custom Validation</div>
<div class="sep" style="top:610.6px"></div>
<svg style="position:absolute;left:204.5px;top:661.9px;color:#fff;overflow:visible;" width="11.6" height="11" viewBox="0 0 11.6 11" preserveAspectRatio="none" fill="currentColor"><path d="M11.4 2.6 L9.4 4.6 L7.4 4.2 L7 2.2 L9 0.2 C7.6 -0.3 6 0.1 5 1.2 C4 2.3 3.8 3.8 4.3 5.1 L0.4 9 C-0.1 9.5 -0.1 10.2 0.4 10.6 C0.8 11.1 1.5 11.1 2 10.6 L5.9 6.7 C7.2 7.2 8.7 7 9.8 6 C10.9 5 11.9 4 11.4 2.6 Z"/><circle cx="1.3" cy="9.7" r="0.5" fill="#1c2b36"/></svg>
<div class="t" style="left:225px;top:657.7px;line-height:20px;font-size:11px;font-weight:bold;color:#fff;transform:scaleX(0.91);">Product Type Toolset Fields</div>
<div class="sep" style="top:648.0px"></div>
<svg style="position:absolute;left:205.3px;top:699.6px;color:#fff;overflow:visible;" width="12.6" height="9.3" viewBox="0 0 12.6 9.3" preserveAspectRatio="none" fill="currentColor"><path d="M4.2 0.4 C4.2 0.2 4.4 0 4.6 0 H12.2 C12.4 0 12.6 0.2 12.6 0.4 V7.4 H4.2 Z"/><path d="M0 7.4 V4.6 C0 4.3 0.1 4.1 0.3 3.9 L1.9 2.3 C2.1 2.1 2.3 2 2.6 2 H4.2 V7.4 Z"/><path fill="#1c2b36" d="M1.1 4.6 L2.6 3.1 H3.4 V4.6 Z"/><path fill="#1c2b36" d="M7.8 1.2 H9 V2.7 H10.5 V3.9 H9 V5.4 H7.8 V3.9 H6.3 V2.7 H7.8 Z"/><circle cx="2.9" cy="7.6" r="1.9" fill="#1c2b36"/><circle cx="9.6" cy="7.6" r="1.9" fill="#1c2b36"/><circle cx="2.9" cy="7.7" r="1.25"/><circle cx="9.6" cy="7.7" r="1.25"/></svg>
<div class="t" style="left:225px;top:695.0999999999999px;line-height:20px;font-size:11px;font-weight:bold;color:#fff;transform:scaleX(0.91);">Store Policies</div>
<div class="sep" style="top:685.4px"></div>
<svg style="position:absolute;left:377px;top:286.8px;color:#1b6578;overflow:visible;" width="11" height="11" viewBox="0 0 11 11" preserveAspectRatio="none" fill="currentColor"><circle cx="5.5" cy="5.5" r="4.8" fill="none" stroke="currentColor" stroke-width="1.1"/><path d="M2.8 4.9 H5.6 V3.2 L8.2 5.5 L5.6 7.8 V6.1 H2.8 Z"/></svg>
<div class="t" style="left:442.5px;top:104.3px;line-height:20px;font-size:15px;font-weight:bold;color:#1d8291;transform:scaleX(0.94);">Store Review Settings</div>
<svg style="position:absolute;left:860px;top:107.2px;color:#e0193d;overflow:visible;" width="12.3" height="8" viewBox="0 0 14 9.6" preserveAspectRatio="none" fill="currentColor"><rect x="0" y="0" width="9.6" height="9.6" rx="1.6"/><path d="M9.9 3.2 L13 1 C13.4 0.7 14 1 14 1.5 V8.1 C14 8.6 13.4 8.9 13 8.6 L9.9 6.4 Z"/></svg>
<div class="t" style="left:876px;top:101.4px;line-height:20px;font-size:12px;font-weight:bold;color:#cf3a57;transform:scaleX(1.0);">Tutorial</div>
<div class="t" style="left:445.5px;top:139.0px;line-height:20px;font-size:13px;font-weight:bold;color:#6b6b6b;transform:scaleX(0.91);">Review auto-approve?</div>
<div class="t" style="left:445.5px;top:172.0px;line-height:20px;font-size:13px;font-weight:bold;color:#6b6b6b;transform:scaleX(0.895);">Review Categories</div>
<div class="abs" style="left:610px;top:140px;width:14.5px;height:13.5px;border:1px solid #c9c9c9;border-radius:3px;box-sizing:border-box;background:#fff"></div>
<svg class="abs" style="left:611.5px;top:141px" width="12" height="11" viewBox="0 0 12 11"><path d="M1.6 5.6 L4.6 8.6 L10.4 2.4" fill="none" stroke="#0b6f74" stroke-width="2.5"/></svg>
<div class="card" style="top:202px;height:89.5px"></div>
<svg style="position:absolute;left:897.3px;top:212.5px;color:#17808f;overflow:visible;" width="14.6" height="13.6" viewBox="0 0 14.6 13.6" preserveAspectRatio="none" fill="currentColor"><path fill="none" stroke="currentColor" stroke-width="2.9" d="M2.4 2.3 L12.2 11.3 M12.2 2.3 L2.4 11.3"/><path d="M0 0 H6 L0 5.6 Z M14.6 0 V5.6 L8.6 0 Z M0 13.6 V8 L6 13.6 Z M14.6 13.6 H8.6 L14.6 8 Z"/></svg>
<div class="t" style="left:455px;top:239.7px;line-height:20px;font-size:13px;font-weight:normal;color:#606060;transform:scaleX(0.97);-webkit-text-stroke:0.3px #606060;">Category</div>
<div class="inp" style="top:236.8px"></div>
<div class="t" style="left:618.5px;top:243.6px;line-height:20px;font-size:13px;font-weight:normal;color:#444;transform:scaleX(0.93);">Feature</div>
<svg style="position:absolute;left:893.3px;top:239.8px;color:#4d4d4d;overflow:visible;" width="15.8" height="15.8" viewBox="0 0 15.5 15.5" preserveAspectRatio="none" fill="currentColor"><circle cx="7.75" cy="7.75" r="6.7" fill="none" stroke="currentColor" stroke-width="1.7"/><path fill="none" stroke="currentColor" stroke-width="2.1" d="M5.4 5.4 L10.1 10.1 M10.1 5.4 L5.4 10.1"/></svg>
<div class="card" style="top:301px;height:89.5px"></div>
<svg style="position:absolute;left:897.3px;top:311.5px;color:#17808f;overflow:visible;" width="14.6" height="13.6" viewBox="0 0 14.6 13.6" preserveAspectRatio="none" fill="currentColor"><path fill="none" stroke="currentColor" stroke-width="2.9" d="M2.4 2.3 L12.2 11.3 M12.2 2.3 L2.4 11.3"/><path d="M0 0 H6 L0 5.6 Z M14.6 0 V5.6 L8.6 0 Z M0 13.6 V8 L6 13.6 Z M14.6 13.6 H8.6 L14.6 8 Z"/></svg>
<div class="t" style="left:455px;top:338.7px;line-height:20px;font-size:13px;font-weight:normal;color:#606060;transform:scaleX(0.97);-webkit-text-stroke:0.3px #606060;">Category</div>
<div class="inp" style="top:335.8px"></div>
<div class="t" style="left:618.5px;top:342.6px;line-height:20px;font-size:13px;font-weight:normal;color:#444;transform:scaleX(0.93);">Varity</div>
<svg style="position:absolute;left:893.3px;top:338.8px;color:#4d4d4d;overflow:visible;" width="15.8" height="15.8" viewBox="0 0 15.5 15.5" preserveAspectRatio="none" fill="currentColor"><circle cx="7.75" cy="7.75" r="6.7" fill="none" stroke="currentColor" stroke-width="1.7"/><path fill="none" stroke="currentColor" stroke-width="2.1" d="M5.4 5.4 L10.1 10.1 M10.1 5.4 L5.4 10.1"/></svg>
<div class="card" style="top:399.5px;height:89.5px"></div>
<svg style="position:absolute;left:897.3px;top:410.0px;color:#17808f;overflow:visible;" width="14.6" height="13.6" viewBox="0 0 14.6 13.6" preserveAspectRatio="none" fill="currentColor"><path fill="none" stroke="currentColor" stroke-width="2.9" d="M2.4 2.3 L12.2 11.3 M12.2 2.3 L2.4 11.3"/><path d="M0 0 H6 L0 5.6 Z M14.6 0 V5.6 L8.6 0 Z M0 13.6 V8 L6 13.6 Z M14.6 13.6 H8.6 L14.6 8 Z"/></svg>
<div class="t" style="left:455px;top:437.2px;line-height:20px;font-size:13px;font-weight:normal;color:#606060;transform:scaleX(0.97);-webkit-text-stroke:0.3px #606060;">Category</div>
<div class="inp" style="top:434.3px"></div>
<div class="t" style="left:618.5px;top:441.1px;line-height:20px;font-size:13px;font-weight:normal;color:#444;transform:scaleX(0.93);">Delivery</div>
<svg style="position:absolute;left:893.3px;top:437.3px;color:#4d4d4d;overflow:visible;" width="15.8" height="15.8" viewBox="0 0 15.5 15.5" preserveAspectRatio="none" fill="currentColor"><circle cx="7.75" cy="7.75" r="6.7" fill="none" stroke="currentColor" stroke-width="1.7"/><path fill="none" stroke="currentColor" stroke-width="2.1" d="M5.4 5.4 L10.1 10.1 M10.1 5.4 L5.4 10.1"/></svg>
<div class="card" style="top:498.5px;height:89px"></div>
<svg style="position:absolute;left:897.3px;top:509.0px;color:#17808f;overflow:visible;" width="14.6" height="13.6" viewBox="0 0 14.6 13.6" preserveAspectRatio="none" fill="currentColor"><path fill="none" stroke="currentColor" stroke-width="2.9" d="M2.4 2.3 L12.2 11.3 M12.2 2.3 L2.4 11.3"/><path d="M0 0 H6 L0 5.6 Z M14.6 0 V5.6 L8.6 0 Z M0 13.6 V8 L6 13.6 Z M14.6 13.6 H8.6 L14.6 8 Z"/></svg>
<div class="t" style="left:455px;top:536.2px;line-height:20px;font-size:13px;font-weight:normal;color:#606060;transform:scaleX(0.97);-webkit-text-stroke:0.3px #606060;">Category</div>
<div class="inp" style="top:533.3px"></div>
<div class="t" style="left:618.5px;top:540.1px;line-height:20px;font-size:13px;font-weight:normal;color:#444;transform:scaleX(0.93);">Responsiveness</div>
<svg style="position:absolute;left:893.3px;top:536.3px;color:#4d4d4d;overflow:visible;" width="15.8" height="15.8" viewBox="0 0 15.5 15.5" preserveAspectRatio="none" fill="currentColor"><circle cx="7.75" cy="7.75" r="6.7" fill="none" stroke="currentColor" stroke-width="1.7"/><path fill="none" stroke="currentColor" stroke-width="2.1" d="M5.4 5.4 L10.1 10.1 M10.1 5.4 L5.4 10.1"/></svg>
<div class="card" style="top:597px;height:112.5px"></div>
<svg style="position:absolute;left:897.3px;top:607.5px;color:#17808f;overflow:visible;" width="14.6" height="13.6" viewBox="0 0 14.6 13.6" preserveAspectRatio="none" fill="currentColor"><path fill="none" stroke="currentColor" stroke-width="2.9" d="M2.4 2.3 L12.2 11.3 M12.2 2.3 L2.4 11.3"/><path d="M0 0 H6 L0 5.6 Z M14.6 0 V5.6 L8.6 0 Z M0 13.6 V8 L6 13.6 Z M14.6 13.6 H8.6 L14.6 8 Z"/></svg>
<div class="t" style="left:455px;top:634.7px;line-height:20px;font-size:13px;font-weight:normal;color:#606060;transform:scaleX(0.97);-webkit-text-stroke:0.3px #606060;">Category</div>
<div class="inp" style="top:631.8px"></div>
<div class="t" style="left:618.5px;top:638.6px;line-height:20px;font-size:13px;font-weight:normal;color:#444;transform:scaleX(0.93);">Support</div>
<svg style="position:absolute;left:893.3px;top:634.8px;color:#4d4d4d;overflow:visible;" width="15.8" height="15.8" viewBox="0 0 15.5 15.5" preserveAspectRatio="none" fill="currentColor"><circle cx="7.75" cy="7.75" r="6.7" fill="none" stroke="currentColor" stroke-width="1.7"/><path fill="none" stroke="currentColor" stroke-width="2.1" d="M5.4 5.4 L10.1 10.1 M10.1 5.4 L5.4 10.1"/></svg>
<svg style="position:absolute;left:894px;top:681px;color:#4a4a4a;overflow:visible;" width="15" height="15" viewBox="0 0 15 15" preserveAspectRatio="none" fill="currentColor"><circle cx="7.5" cy="7.5" r="7.5"/><path fill="#fff" d="M6.4 3.4 H8.6 V6.4 H11.6 V8.6 H8.6 V11.6 H6.4 V8.6 H3.4 V6.4 H6.4 Z"/></svg>
<div class="gbox" style="left:-0.4px;top:255.3px;width:195.6px;height:55.5px"></div>
<div class="gbox" style="left:190.6px;top:267px;width:217.6px;height:51.6px"></div>
<div class="gbox" style="left:428.8px;top:122px;width:215.4px;height:79.5px"></div>
</body></html>
